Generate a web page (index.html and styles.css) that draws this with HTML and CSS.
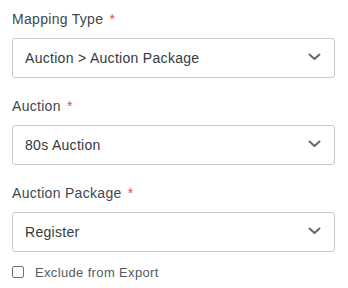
FILE: index.html
```html
<!DOCTYPE html>
<html>
<head>
<meta charset="utf-8">
<link rel="stylesheet" href="styles.css">
</head>
<body>
<form class="form">
  <div class="field">
    <div class="label">Mapping Type <span class="req">*</span></div>
    <div class="select">
      <span class="value">Auction &gt; Auction Package</span>
      <svg class="chev" width="13" height="8" viewBox="0 0 13 8"><path d="M1.5 1.5 L6.5 6 L11.5 1.5" fill="none" stroke="#5f6a74" stroke-width="2" stroke-linecap="round" stroke-linejoin="round"/></svg>
    </div>
  </div>
  <div class="field">
    <div class="label">Auction <span class="req">*</span></div>
    <div class="select">
      <span class="value">80s Auction</span>
      <svg class="chev" width="13" height="8" viewBox="0 0 13 8"><path d="M1.5 1.5 L6.5 6 L11.5 1.5" fill="none" stroke="#5f6a74" stroke-width="2" stroke-linecap="round" stroke-linejoin="round"/></svg>
    </div>
  </div>
  <div class="field last">
    <div class="label">Auction Package <span class="req">*</span></div>
    <div class="select">
      <span class="value">Register</span>
      <svg class="chev" width="13" height="8" viewBox="0 0 13 8"><path d="M1.5 1.5 L6.5 6 L11.5 1.5" fill="none" stroke="#5f6a74" stroke-width="2" stroke-linecap="round" stroke-linejoin="round"/></svg>
    </div>
  </div>
  <label class="check">
    <span class="box"></span>
    <span class="check-text">Exclude from Export</span>
  </label>
</form>
</body>
</html>
```
FILE: styles.css
```css
html, body {
  margin: 0;
  background: #ffffff;
}
body {
  padding: 9px 13px 0 12px;
  font-family: "Liberation Sans", Arial, sans-serif;
}
.form {
  display: flex;
  flex-direction: column;
}
.field {
  display: flex;
  flex-direction: column;
  margin-bottom: 18px;
}
.field.last {
  margin-bottom: 0;
}
.label {
  font-size: 14px;
  line-height: 20px;
  letter-spacing: 0.3px;
  color: #40474d;
  margin-bottom: 9px;
}
.req {
  color: #e0524c;
  margin-left: 2px;
}
.select {
  height: 40px;
  box-sizing: border-box;
  border: 1px solid #c4cacf;
  border-radius: 3px;
  display: flex;
  align-items: center;
  justify-content: space-between;
  padding: 0 13px 0 12px;
}
.value {
  font-size: 14px;
  letter-spacing: 0.3px;
  color: #333a40;
}
.chev {
  display: block;
  margin-top: -3px;
}
.check {
  display: flex;
  align-items: center;
  margin-top: 10px;
  height: 20px;
}
.box {
  width: 12px;
  height: 12px;
  box-sizing: border-box;
  border: 1px solid #6f767c;
  border-radius: 2px;
  margin-right: 11px;
}
.check-text {
  font-size: 13px;
  letter-spacing: 0.35px;
  color: #545b61;
}
```
